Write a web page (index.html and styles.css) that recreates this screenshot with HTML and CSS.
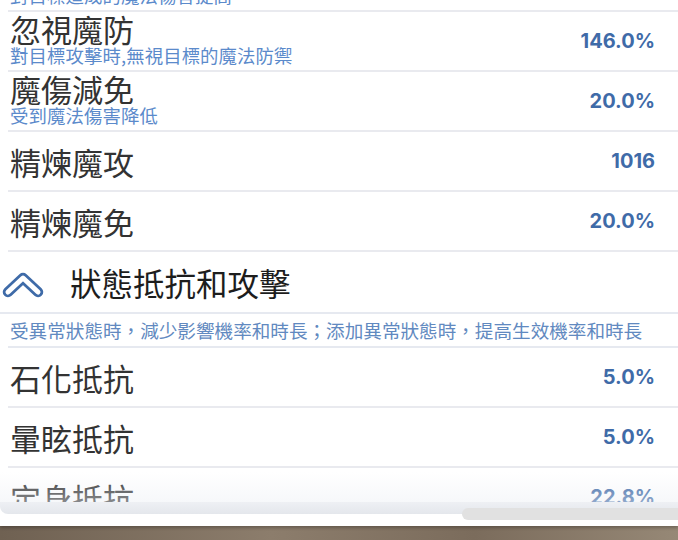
FILE: index.html
```html
<!DOCTYPE html>
<html lang="zh-Hant">
<head>
    <meta charset="UTF-8">
    <title>屬性</title>
    <link rel="stylesheet" href="styles.css">
</head>
<body>
    <div class="sheet">
        <div class="list">
            <div class="rows">
                <div class="row">
                    <div class="name">
                        <p class="title">魔法增傷</p>
                        <p class="sub">對目標造成的魔法傷害提高</p>
                    </div>
                    <span class="val">10.0%</span>
                </div>
                <div class="row">
                    <div class="name">
                        <p class="title">忽視魔防</p>
                        <p class="sub">對目標攻擊時,無視目標的魔法防禦</p>
                    </div>
                    <span class="val">146.0%</span>
                </div>
                <div class="row">
                    <div class="name">
                        <p class="title">魔傷減免</p>
                        <p class="sub">受到魔法傷害降低</p>
                    </div>
                    <span class="val">20.0%</span>
                </div>
                <div class="row">
                    <p class="title">精煉魔攻</p>
                    <span class="val">1016</span>
                </div>
                <div class="row">
                    <p class="title">精煉魔免</p>
                    <span class="val">20.0%</span>
                </div>

                <div class="group">
                    <svg class="fold" width="42" height="30" viewBox="0 0 42 30">
                        <polyline points="6,22 21,8 36,22" fill="none" stroke="#3f6ba8" stroke-width="10.5" stroke-linecap="round" stroke-linejoin="round"/>
                        <polyline points="6,22 21,8 36,22" fill="none" stroke="#fff" stroke-width="5" stroke-linecap="round" stroke-linejoin="round"/>
                    </svg>
                    <h2 class="group-title">狀態抵抗和攻擊</h2>
                </div>
                <div class="desc">受異常狀態時，減少影響機率和時長；添加異常狀態時，提高生效機率和時長</div>

                <div class="row">
                    <p class="title">石化抵抗</p>
                    <span class="val">5.0%</span>
                </div>
                <div class="row">
                    <p class="title">暈眩抵抗</p>
                    <span class="val">5.0%</span>
                </div>
                <div class="row">
                    <p class="title">定身抵抗</p>
                    <span class="val">22.8%</span>
                </div>
            </div>
        </div>
        <div class="foot"></div>
        <div class="scrollbar"></div>
    </div>
</body>
</html>
```

FILE: styles.css
```css
*{margin: 0;padding: 0;box-sizing: border-box}
body{
    width: 678px;
    height: 540px;
    overflow: hidden;
    background: linear-gradient(90deg, #6f6152 0%, #8c7d6c 40%, #7b6c5c 70%, #968876 100%);
    font-family: "Noto Sans CJK TC", "Noto Sans", sans-serif;
}
.sheet{
    position: relative;
    background-color: #fff;
    padding-bottom: 12px;
    box-shadow: 0 2px 3px rgba(0,0,0,0.25);
}
.list{
    position: relative;
    height: 502px;
    overflow: hidden;
}
/* bottom fade over the last row */
.list::after{
    content: "";
    position: absolute;
    left: 0;
    right: 0;
    bottom: 0;
    height: 30px;
    background: linear-gradient(rgba(240,242,246,0), rgba(236,239,244,0.45));
}
.rows{
    margin-top: -48px;
    padding-left: 8px;
}
.row{
    display: flex;
    align-items: center;
    justify-content: space-between;
    height: 60px;
    padding: 0 23px 0 2px;
    border-bottom: 2px solid #e9eaef;
}
.name{
    padding: 0 0 5px;
}
.title{
    font-size: 31px;
    line-height: 33px;
    color: #333;
}
.sub{
    font-size: 18.4px;
    line-height: 20px;
    letter-spacing: 0.1px;
    color: #5b8acb;
    white-space: nowrap;
}
.val{
    font-family: Inter, "Open Sans", sans-serif;
    font-weight: 700;
    font-size: 20px;
    color: #3f6ba8;
}
.group{
    display: flex;
    align-items: center;
    height: 62px;
    margin-left: -8px;
    padding-left: 2px;
    border-bottom: 2px solid #e6e9f0;
}
.fold{
    margin-top: 6px;
}
.group-title{
    margin-left: 26px;
    font-size: 31.5px;
    line-height: 34px;
    font-weight: 400;
    color: #1d1d1d;
}
.desc{
    height: 34px;
    padding: 4px 0 0 2px;
    font-size: 18.6px;
    line-height: 24px;
    color: #6189c0;
    white-space: nowrap;
    border-bottom: 2px solid #e6e9f0;
}
.foot{
    height: 12px;
    border-radius: 0 0 0 8px;
    background: linear-gradient(#eef0f4, #e4e7ec);
}
.scrollbar{
    position: absolute;
    right: 0;
    bottom: 6px;
    width: 216px;
    height: 12px;
    border-radius: 6px 0 0 6px;
    background-color: #e1e1e1;
}
```
